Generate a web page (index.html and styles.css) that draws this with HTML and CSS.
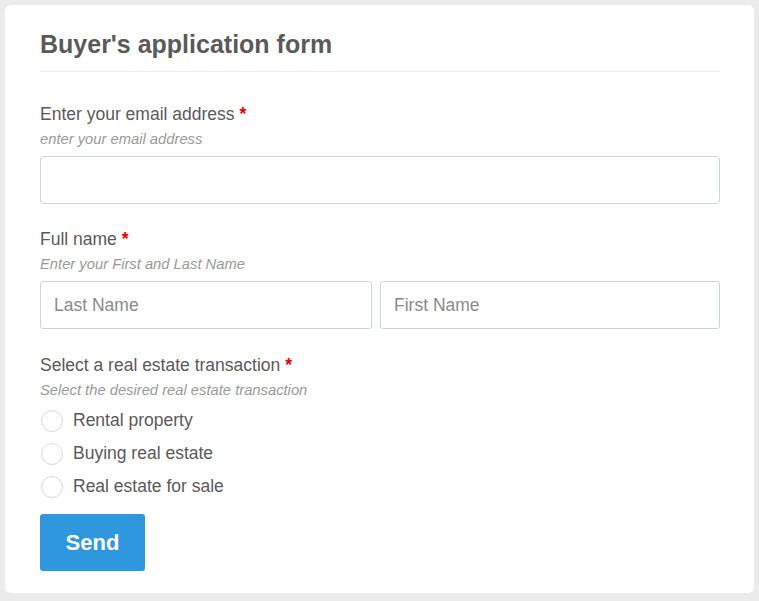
FILE: index.html
```html
<!DOCTYPE html>
<html>
<head>
<meta charset="utf-8">
<link rel="stylesheet" href="styles.css">
</head>
<body>
<form class="card">
  <h1 class="title">Buyer's application form</h1>
  <div class="field field-first">
    <div class="label">Enter your email address <span class="req">*</span></div>
    <div class="hint">enter your email address</div>
    <div class="input"></div>
  </div>
  <div class="field field-name">
    <div class="label">Full name <span class="req">*</span></div>
    <div class="hint">Enter your First and Last Name</div>
    <div class="name-row">
      <div class="input"><span class="ph">Last Name</span></div>
      <div class="input"><span class="ph">First Name</span></div>
    </div>
  </div>
  <div class="field field-radio">
    <div class="label">Select a real estate transaction <span class="req">*</span></div>
    <div class="hint hint-radio">Select the desired real estate transaction</div>
    <div class="radios">
      <div class="radio"><span class="circle"></span><span>Rental property</span></div>
      <div class="radio"><span class="circle"></span><span>Buying real estate</span></div>
      <div class="radio"><span class="circle"></span><span>Real estate for sale</span></div>
    </div>
  </div>
  <div class="actions"><span class="btn">Send</span></div>
</form>
</body>
</html>
```

FILE: styles.css
```css
html, body {
  margin: 0;
  padding: 0;
}
body {
  background: #ebebeb;
  font-family: "Liberation Sans", Arial, sans-serif;
  color: #5a5a5a;
  padding: 5px;
  height: 601px;
  box-sizing: border-box;
}
.card {
  background: #fff;
  border-radius: 6px;
  padding: 26px 34px 22px 35px;
  height: 588px;
  box-sizing: border-box;
}
.title {
  margin: 0;
  font-size: 25px;
  line-height: 26px;
  font-weight: bold;
  color: #5a5a5a;
  padding-bottom: 14px;
  border-bottom: 1px solid #ececec;
}
.field {
  display: flex;
  flex-direction: column;
}
.field-first { margin-top: 31px; }
.field-name { margin-top: 24px; }
.field-radio { margin-top: 25px; }
.label {
  font-size: 17.5px;
  line-height: 22px;
}
.req {
  color: #e40000;
  font-weight: bold;
}
.hint {
  font-size: 14.75px;
  line-height: 18px;
  font-style: italic;
  color: #9a9a9a;
  margin-top: 5px;
  margin-bottom: 8px;
}
.hint-radio { margin-bottom: 5px; }
.input {
  height: 48px;
  box-sizing: border-box;
  border: 1px solid #ccd6d9;
  border-radius: 3px;
  padding: 0 13px;
  display: flex;
  align-items: center;
  font-size: 17.5px;
}
.ph { color: #8a8a8a; }
.name-row {
  display: grid;
  grid-template-columns: 332px 1fr;
  gap: 8px;
}
.radios {
  display: flex;
  flex-direction: column;
}
.radio {
  height: 33px;
  display: flex;
  align-items: center;
  font-size: 17.5px;
}
.circle {
  width: 22px;
  height: 22px;
  box-sizing: border-box;
  border: 1.5px solid #d3d9dc;
  border-radius: 50%;
  margin-left: 1px;
  margin-right: 10px;
  flex: none;
}
.actions {
  margin-top: 11px;
  display: flex;
}
.btn {
  background: #2f97de;
  color: #fff;
  font-weight: bold;
  font-size: 22px;
  height: 57px;
  width: 105px;
  border-radius: 3px;
  display: flex;
  align-items: center;
  justify-content: center;
}
```
